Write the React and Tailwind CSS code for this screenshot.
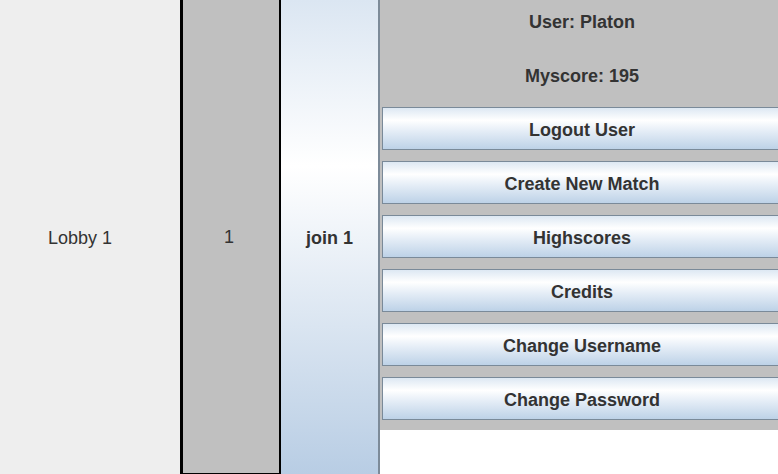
import React from 'react';

const btnGradient =
  'bg-[linear-gradient(to_bottom,#dde8f3_0%,#ffffff_30%,#e6eef7_55%,#bdd2e7_100%)]';

function MenuButton({ label }) {
  return (
    <button
      type="button"
      className={`h-[43px] w-full shrink-0 border border-[#7a8a99] ${btnGradient} pt-[3px] text-[18px] font-bold text-[#333333]`}
    >
      {label}
    </button>
  );
}

export default function App() {
  const buttons = ['Logout User', 'Create New Match', 'Highscores', 'Credits', 'Change Username', 'Change Password'];

  return (
    <div className="flex h-[474px] w-[778px] overflow-hidden bg-white font-['Liberation_Sans',Arial,sans-serif] text-[18px] text-[#333333]">
      <div className="flex h-full w-[180px] shrink-0 items-center justify-center bg-[#eeeeee] pr-[20px] pt-[2px]">Lobby 1</div>
      <div className="flex h-full w-[101px] shrink-0 items-center justify-center border-l-[3px] border-r-2 border-b border-black bg-[#c0c0c0] pr-[4px] pt-[2px]">
        1
      </div>
      <button
        type="button"
        className="h-full w-[99px] shrink-0 border-r-2 border-[#7d8b99] bg-[linear-gradient(to_bottom,#dbe6f2_0%,#ffffff_35%,#b8cde4_100%)] pt-[2px] font-bold"
      >
        join 1
      </button>
      <div className="flex w-[402px] shrink-0 flex-col self-start bg-[#c0c0c0] pb-[10px] pl-[2px]">
        <div className="flex h-[43px] items-center justify-center pt-[2px] font-bold">User: Platon</div>
        <div className="mt-[11px] flex h-[43px] items-center justify-center pt-[2px] font-bold">Myscore: 195</div>
        <div className="mt-[10px] flex flex-col gap-[11px]">
          {buttons.map((b) => (
            <MenuButton key={b} label={b} />
          ))}
        </div>
      </div>
    </div>
  );
}
